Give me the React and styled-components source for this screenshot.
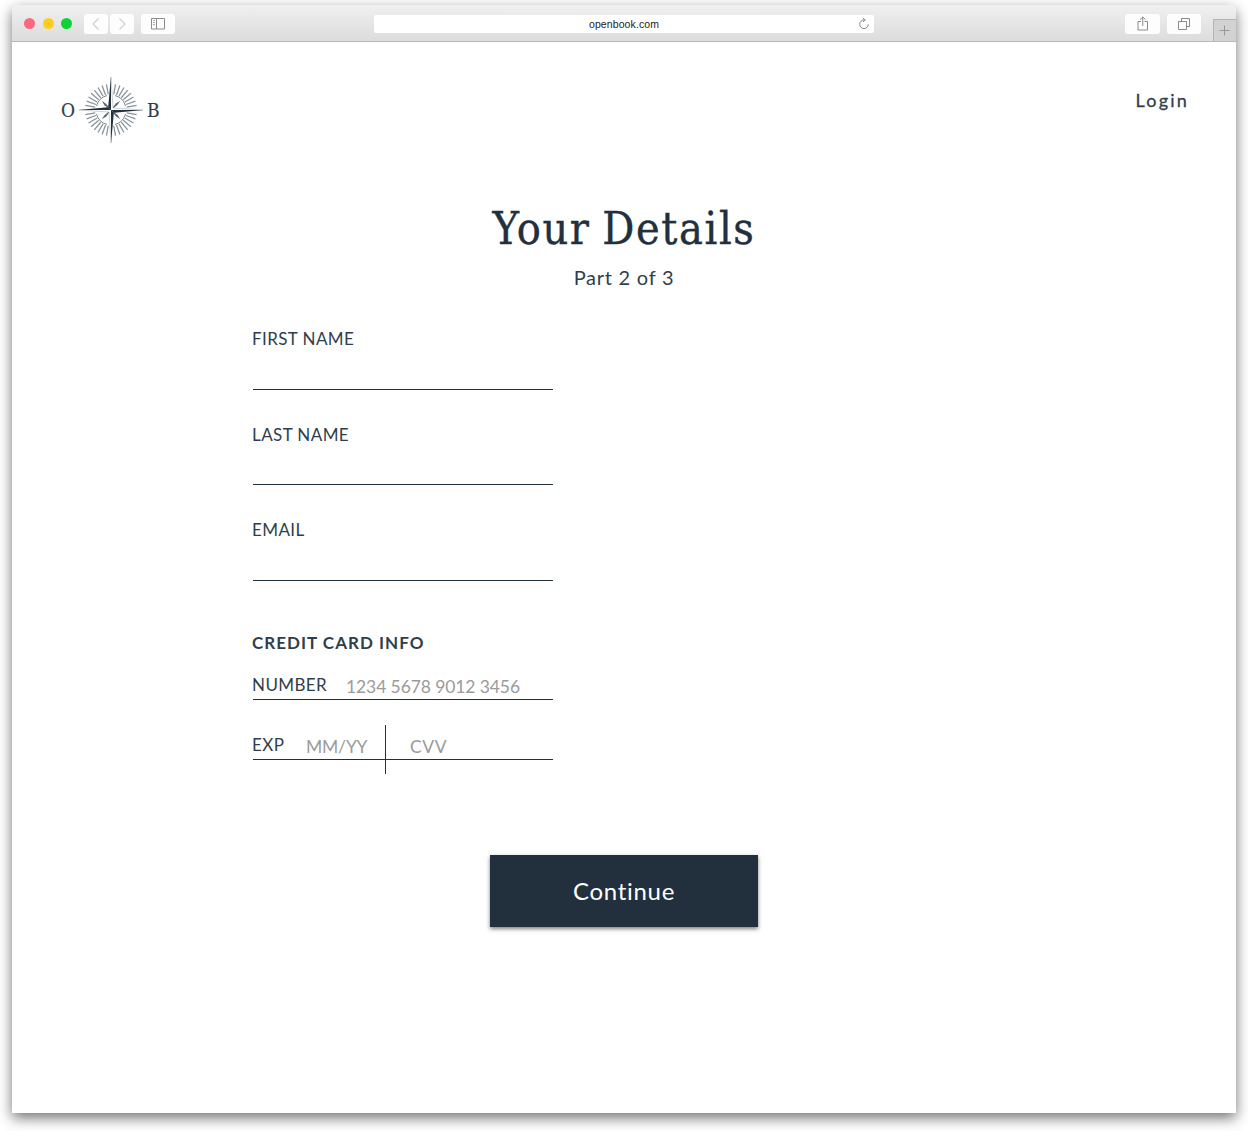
import React from "react";
import styled, { createGlobalStyle } from "styled-components";

const ink = "#22303d";
const soft = "#303e4b";
const sans = '"Lato", "Open Sans", sans-serif';
const serif = '"DejaVu Serif Condensed", "DejaVu Serif", serif';

const GlobalStyle = createGlobalStyle`
  * { box-sizing: border-box; }
  body { margin: 0; background: #fff; color: ${soft}; font-family: ${sans}; }
`;

const Stage = styled.div`
  height: 1131px;
  padding: 5px 12px 18px;
  overflow: hidden;
`;

const Window = styled.div`
  display: flex;
  flex-direction: column;
  height: 1108px;
  background: #fff;
  border-radius: 5px 5px 0 0;
  box-shadow: 0 5px 14px rgba(0, 0, 0, 0.55);
`;

const Toolbar = styled.header`
  display: flex;
  align-items: center;
  height: 37px;
  flex: none;
  padding-top: 1px;
  padding-left: 12px;
  border-bottom: 1px solid #b8b8b8;
  border-radius: 5px 5px 0 0;
  background: linear-gradient(#f0f0f0, #dcdcdc);
`;

const Lights = styled.div`
  display: flex;
  gap: 7.5px;
  margin-right: 12px;
`;

const Light = styled.span`
  width: 11px;
  height: 11px;
  border-radius: 50%;
  background: ${(p) => p.$color};
`;

const ToolButton = styled.button`
  display: flex;
  align-items: center;
  justify-content: center;
  width: ${(p) => p.$width}px;
  height: 20px;
  margin: 0 ${(p) => p.$after}px 0 0;
  padding: 0;
  border: 0;
  border-radius: 3px;
  background: #fdfdfd;
`;

const Address = styled.div`
  display: grid;
  grid-template-columns: 16px 1fr 16px;
  align-items: center;
  width: 500px;
  height: 18px;
  margin-left: 199px;
  margin-right: 251px;
  border-radius: 2px;
  background: #fff;
  color: #222;
  font: 10.5px/18px "Liberation Sans", Arial, sans-serif;
  letter-spacing: 0.1px;
  text-align: center;
`;

const NewTab = styled.button`
  display: flex;
  align-items: center;
  justify-content: center;
  align-self: flex-end;
  width: 23px;
  height: 22px;
  margin-left: auto;
  padding: 0 1px 0 0;
  border: solid #b4b4b4;
  border-width: 1px 0 0 1px;
  background: #d2d2d2;
`;

const Page = styled.main`
  display: flex;
  flex-direction: column;
`;

const Nav = styled.nav`
  display: flex;
  justify-content: space-between;
  align-items: flex-start;
  height: 157px;
  padding: 33px 48px 0 49px;
`;

const Brand = styled.div`
  display: flex;
  align-items: center;
  height: 70px;
`;

const Initial = styled.span`
  width: 17px;
  padding-left: ${(p) => p.$inset || 0}px;
  font: 19px/68px ${serif};
  white-space: nowrap;
  -webkit-text-stroke: 0.2px ${soft};
`;

const Login = styled.a`
  margin-top: 13px;
  font-size: 18px;
  line-height: 24px;
  letter-spacing: 2.2px;
  margin-right: -1px;
  -webkit-text-stroke: 0.3px ${soft};
`;

const Title = styled.h1`
  margin: 0;
  text-align: center;
  color: ${ink};
  font: 400 44.5px/60px ${serif};
  letter-spacing: 1.6px;
  word-spacing: -2.5px;
  -webkit-text-stroke: 0.4px ${ink};
`;

const Step = styled.p`
  margin: 3px 0 0;
  text-align: center;
  font-size: 20px;
  line-height: 30px;
  letter-spacing: 0.75px;
`;

const Form = styled.form`
  display: flex;
  flex-direction: column;
  width: 301px;
  margin: 30px 0 0 240px;
`;

const Field = styled.label`
  height: 95.7px;
`;

const Label = styled.span`
  display: block;
  width: ${(p) => (p.$width ? `${p.$width}px` : "auto")};
  font-size: 17px;
  line-height: 34px;
  letter-spacing: 0.4px;
  white-space: nowrap;
`;

const Entry = styled.div`
  width: 300px;
  height: 33.6px;
  margin-left: 1px;
  border-bottom: 1px solid ${ink};
`;

const Section = styled.h2`
  margin: 17px 0 0;
  font-size: 17px;
  line-height: 34px;
  font-weight: 700;
  letter-spacing: 1.02px;
  white-space: nowrap;
`;

const CardRow = styled.div`
  display: flex;
  height: ${(p) => p.$height}px;
  padding-top: ${(p) => p.$top}px;
  line-height: 34px;
`;

const Underline = styled.div`
  height: 1px;
  margin-left: 1px;
  background: ${ink};
`;

const Hint = styled.span`
  padding-top: 2px;
  width: ${(p) => (p.$width ? `${p.$width}px` : "auto")};
  color: #9b9b9b;
  font-size: 17.5px;
  letter-spacing: ${(p) => p.$track}px;
  white-space: nowrap;
`;

const Divider = styled.i`
  flex: none;
  width: 1px;
  height: 49px;
  margin: -3px 24px 0 0;
  background: ${ink};
`;

const Continue = styled.button`
  align-self: center;
  width: 268px;
  height: 72px;
  margin-top: 95px;
  padding: 0;
  border: 0;
  background: ${ink};
  box-shadow: 0 2px 4px rgba(0, 0, 0, 0.5);
  color: #fff;
  font: 400 24px/72px ${sans};
  letter-spacing: 0.7px;
`;

function Compass() {
  const rays = [];
  for (let q = 0; q < 4; q += 1) {
    for (let i = 0; i < 8; i += 1) {
      rays.push(q * 90 + 10 + i * 10);
    }
  }
  return (
    <svg width="66" height="68" viewBox="-33 -34 66 68">
      <g stroke="#89929a" strokeWidth="1.25">
        {rays.map((a) => (
          <path key={a} d="M0-16V-26" transform={`rotate(${a})`} />
        ))}
      </g>
      <g fill="none" stroke="#7d868e" strokeWidth="1">
        {[0, 90, 180, 270].map((a) => (
          <path key={a} d="M4-14.500A15 15 0 0 1 14.500-4" transform={`rotate(${a})`} />
        ))}
      </g>
      <g fill="#5c6974">
        {[45, 135, 225, 315].map((a) => (
          <path key={a} d="M-.4-2L-1.300-8L0-13L1-8L.4-2Z" transform={`rotate(${a})`} />
        ))}
      </g>
      <path d="M0-33L2-2L32 0L2 2L0 33L-2 2L-32 0L-2-2Z" fill="#fff" stroke="#9aa2a9" strokeWidth=".5" />
      <path d="M0-33V0L-2.800-3ZM0 33V0L2.800 3ZM-32 0H0L-3-2.800ZM32 0H0L3 2.800Z" fill={ink} />
    </svg>
  );
}

function App() {
  return (
    <Stage>
      <GlobalStyle />
      <Window>
        <Toolbar>
          <Lights>
            <Light $color="#ff6680" />
            <Light $color="#ffcc22" />
            <Light $color="#0fd138" />
          </Lights>
          <ToolButton $width={24} $after={2}>
            <svg width="10" height="14" fill="none" stroke="#cfcfcf" strokeWidth="1.2"><path d="M7.500 1.500L2 7l5.500 5.500" /></svg>
          </ToolButton>
          <ToolButton $width={24} $after={7}>
            <svg width="10" height="14" fill="none" stroke="#cfcfcf" strokeWidth="1.2"><path d="M2.500 1.500L8 7l-5.500 5.500" /></svg>
          </ToolButton>
          <ToolButton $width={34} $after={0}>
            <svg width="14" height="12" fill="none" stroke="#8c8c8c"><path d="M.5.5h13v10.500H.5zM5.500.500v10.500" /><path d="M2 2.500h2M2 4.500h2M2 6.500h2" stroke="#aaa" /></svg>
          </ToolButton>
          <Address>
            <span />
            <span>openbook.com</span>
            <svg width="12" height="12" viewBox="0 0 12 12" fill="none" stroke="#8a8a8a"><path d="M6 2A4.300 4.300 0 1 0 10.300 6.300M5 .3L7.300 2L5 4" /></svg>
          </Address>
          <ToolButton $width={35} $after={7}>
            <svg width="12" height="15" fill="none" stroke="#8a8a8a"><path d="M4 5.500H1v8.500h9.500v-8.500H7.500M5.750 10V1M3 3.700L5.750 1l2.750 2.700" /></svg>
          </ToolButton>
          <ToolButton $width={34} $after={0}>
            <svg width="12" height="12" fill="none" stroke="#8a8a8a"><path d="M.5 3.500h8v8h-8zM3.500 3.500v-3h8v8h-3" /></svg>
          </ToolButton>
          <NewTab>
            <svg width="11" height="11" stroke="#989898"><path d="M.5 5.500h10M5.500.500v10" /></svg>
          </NewTab>
        </Toolbar>
        <Page>
          <Nav>
            <Brand>
              <Initial>O</Initial>
              <Compass />
              <Initial $inset={3}>B</Initial>
            </Brand>
            <Login>Login</Login>
          </Nav>
          <Title>Your Details</Title>
          <Step>Part 2 of 3</Step>
          <Form>
            <Field><Label>FIRST NAME</Label><Entry /></Field>
            <Field><Label>LAST NAME</Label><Entry /></Field>
            <Field><Label>EMAIL</Label><Entry /></Field>
            <Section>CREDIT CARD INFO</Section>
            <CardRow $height={39} $top={8}>
              <Label $width={94}>NUMBER</Label>
              <Hint $track={-0.1}>1234 5678 9012 3456</Hint>
            </CardRow>
            <Underline />
            <CardRow $height={59} $top={28}>
              <Label $width={54}>EXP</Label>
              <Hint $width={79} $track={-0.2}>MM/YY</Hint>
              <Divider />
              <Hint $track={0.6}>CVV</Hint>
            </CardRow>
            <Underline />
          </Form>
          <Continue>Continue</Continue>
        </Page>
      </Window>
    </Stage>
  );
}

export default App;
